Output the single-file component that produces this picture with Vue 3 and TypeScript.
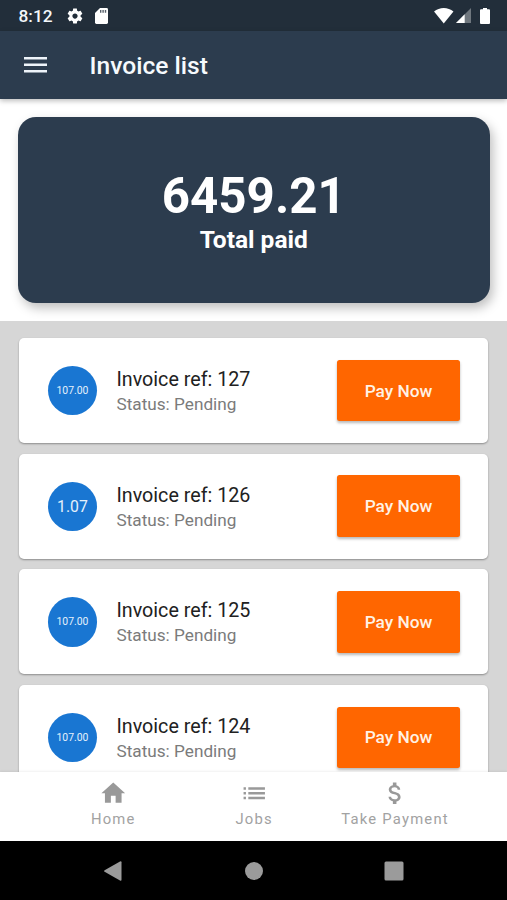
<script setup lang="ts">
interface Invoice {
  ref: number
  amount: string
  status: string
}

interface Tab {
  label: string
  icon: string
}

const total = '6459.21'

const invoices: Invoice[] = [
  { ref: 127, amount: '107.00', status: 'Pending' },
  { ref: 126, amount: '1.07', status: 'Pending' },
  { ref: 125, amount: '107.00', status: 'Pending' },
  { ref: 124, amount: '107.00', status: 'Pending' },
]

const tabs: Tab[] = [
  { label: 'Home', icon: 'M10 20v-6h4v6h5v-8h3L12 3 2 12h3v8z' },
  {
    label: 'Jobs',
    icon: 'M3 13h2v-2H3v2zm0 4h2v-2H3v2zm0-8h2V7H3v2zm4 4h14v-2H7v2zm0 4h14v-2H7v2zM7 7v2h14V7H7z',
  },
  {
    label: 'Take Payment',
    icon: 'M11.8 10.9c-2.27-.59-3-1.2-3-2.15 0-1.09 1.01-1.85 2.7-1.85 1.78 0 2.44.85 2.5 2.1h2.21c-.07-1.72-1.12-3.3-3.21-3.81V3h-3v2.16c-1.94.42-3.5 1.68-3.5 3.61 0 2.31 1.91 3.46 4.7 4.13 2.5.6 3 1.48 3 2.41 0 .69-.49 1.79-2.7 1.79-2.06 0-2.87-.92-2.98-2.1h-2.2c.12 2.19 1.76 3.42 3.68 3.83V21h3v-2.15c1.95-.37 3.5-1.5 3.5-3.55 0-2.84-2.43-3.81-4.7-4.4z',
  },
]
</script>

<template>
  <div class="screen">
    <div class="status-bar">
      <span class="clock">8:12</span>
      <svg class="gear" viewBox="0 0 24 24">
        <path
          fill-rule="evenodd"
          d="M19.43 12.98c.04-.32.07-.64.07-.98s-.03-.66-.07-.98l2.11-1.65c.19-.15.24-.42.12-.64l-2-3.46c-.12-.22-.39-.3-.61-.22l-2.49 1c-.52-.4-1.08-.73-1.69-.98l-.38-2.65C14.46 2.18 14.25 2 14 2h-4c-.25 0-.46.18-.49.42l-.38 2.65c-.61.25-1.17.59-1.69.98l-2.49-1c-.23-.09-.49 0-.61.22l-2 3.46c-.13.22-.07.49.12.64l2.11 1.65c-.04.32-.07.65-.07.98s.03.66.07.98l-2.11 1.65c-.19.15-.24.42-.12.64l2 3.46c.12.22.39.3.61.22l2.49-1c.52.4 1.08.73 1.69.98l.38 2.65c.03.24.24.42.49.42h4c.25 0 .46-.18.49-.42l.38-2.65c.61-.25 1.17-.59 1.69-.98l2.49 1c.23.09.49 0 .61-.22l2-3.46c.12-.22.07-.49-.12-.64l-2.11-1.65zM12 15.5c-1.93 0-3.5-1.57-3.5-3.5s1.57-3.5 3.5-3.5 3.5 1.57 3.5 3.5-1.57 3.5-3.5 3.5z"
        />
      </svg>
      <svg class="sd" viewBox="0 0 13 16">
        <path d="M5 0h6.6Q13 0 13 1.4v13.2Q13 16 11.6 16H1.4Q0 16 0 14.6V5z" />
        <path class="sd-pins" d="M5 2h1.4v2.7H5zM7.4 2h1.4v2.7H7.4zM9.8 2h1.4v2.7H9.8z" />
      </svg>
      <span class="spacer"></span>
      <svg class="wifi" viewBox="0 0 20 16">
        <path d="M0 3.7C5.5-1.2 14.5-1.2 20 3.7L10 16z" />
      </svg>
      <svg class="signal" viewBox="0 0 15 15">
        <path fill-opacity=".35" d="M15 0v15H0z" />
        <path d="M8.7 6.3V15H0z" />
      </svg>
      <svg class="battery" viewBox="0 0 10 16">
        <path d="M3 0h4v1.2h2Q10 1.2 10 2.2v12.8Q10 16 9 16H1Q0 16 0 15V2.2Q0 1.2 1 1.2h2z" />
      </svg>
    </div>

    <header class="app-bar">
      <svg class="menu" viewBox="0 0 24 16">
        <path d="M0 0h24v2.6H0zM0 6.7h24v2.6H0zM0 13.4h24V16H0z" />
      </svg>
      <h1 class="title">Invoice list</h1>
    </header>

    <section class="summary">
      <div class="total-card">
        <span class="total">{{ total }}</span>
        <span class="total-label">Total paid</span>
      </div>
    </section>

    <main class="list">
      <article v-for="invoice in invoices" :key="invoice.ref" class="invoice">
        <div class="avatar" :class="{ small: invoice.amount.length > 4 }">{{ invoice.amount }}</div>
        <div class="details">
          <span class="ref">Invoice ref: {{ invoice.ref }}</span>
          <span class="state">Status: {{ invoice.status }}</span>
        </div>
        <button class="pay" type="button">Pay Now</button>
      </article>
    </main>

    <nav class="tabs">
      <a v-for="tab in tabs" :key="tab.label" class="tab">
        <svg class="tab-icon" viewBox="0 0 24 24"><path :d="tab.icon" /></svg>
        <span class="tab-label">{{ tab.label }}</span>
      </a>
    </nav>

    <div class="system-nav">
      <svg viewBox="0 0 20 20"><path d="M1.6 9.2 17 .4Q18.5-.2 18.5 1.2v17.6Q18.5 20.2 17 19.6L1.6 10.8Q.5 10 1.6 9.2z" /></svg>
      <svg viewBox="0 0 20 20"><circle cx="10" cy="10" r="9" /></svg>
      <svg viewBox="0 0 20 20"><rect x=".5" y=".5" width="19" height="19" rx="1.5" /></svg>
    </div>
  </div>
</template>

<style>
body {
  background: #fff;
}
</style>

<style scoped>
.screen {
  display: flex;
  flex-direction: column;
  width: 507px;
  height: 900px;
  overflow: hidden;
  background: #fff;
  font-family: Roboto, 'Liberation Sans', sans-serif;
}

svg {
  display: block;
  flex: none;
  fill: #fff;
}

.status-bar {
  display: flex;
  flex: none;
  align-items: center;
  box-sizing: border-box;
  height: 30.5px;
  padding: 1px 17.5px 0 18.5px;
  background: #222e3a;
  color: #f4f8fb;
}

.clock {
  width: 47.5px;
  font-size: 17.3px;
  font-weight: 500;
  line-height: 20px;
}

.gear {
  width: 18px;
  height: 18px;
}

.sd {
  width: 13px;
  height: 16px;
  margin-left: 11px;
}

.sd-pins {
  fill: #56606a;
}

.spacer {
  flex: 1;
}

.wifi {
  width: 19.5px;
  height: 15.5px;
}

.signal {
  width: 15px;
  height: 15px;
  margin-left: 2.5px;
}

.battery {
  width: 10px;
  height: 16px;
  margin-left: 8.5px;
}

.app-bar {
  position: relative;
  z-index: 1;
  display: flex;
  flex: none;
  align-items: center;
  box-sizing: border-box;
  height: 68.5px;
  padding-left: 24px;
  background: #2c3c4e;
  box-shadow: 0 2px 5px rgba(0, 0, 0, 0.26);
}

.menu {
  width: 23px;
  height: 15.5px;
  fill: #eef4fa;
}

.title {
  margin: 2px 0 0 42.5px;
  color: #f6fafd;
  font-size: 24.6px;
  font-weight: 500;
  line-height: 30px;
}

.summary {
  flex: none;
  box-sizing: border-box;
  height: 221.5px;
  padding: 17.5px 17.5px 0 18px;
  overflow: hidden;
}

.total-card {
  display: flex;
  flex-direction: column;
  align-items: center;
  box-sizing: border-box;
  height: 186.5px;
  padding-top: 50px;
  border-radius: 18px;
  background: #2c3c4e;
  box-shadow: 3px 5px 11px rgba(0, 0, 0, 0.26);
  color: #fff;
}

.total {
  font-size: 49.3px;
  font-weight: 700;
  line-height: 58px;
}

.total-label {
  font-size: 24.5px;
  font-weight: 700;
  line-height: 30px;
}

.list {
  display: flex;
  flex: 1;
  flex-direction: column;
  gap: 10.3px;
  min-height: 0;
  padding: 17.5px 18.6px 0 19.4px;
  overflow: hidden;
  background: #d6d6d6;
}

.invoice {
  display: flex;
  flex: none;
  align-items: center;
  box-sizing: border-box;
  height: 105.3px;
  padding: 0 28.4px 0 28.4px;
  border-radius: 5px;
  background: #fff;
  box-shadow: 0 1px 2px rgba(0, 0, 0, 0.35);
}

.avatar {
  display: flex;
  flex: none;
  align-items: center;
  justify-content: center;
  width: 49.4px;
  height: 49.4px;
  border-radius: 50%;
  background: #1976d2;
  color: #e4f0fb;
  font-size: 15.8px;
}

.avatar.small {
  font-size: 10.4px;
}

.details {
  display: flex;
  flex: 1;
  flex-direction: column;
  margin: 2px 0 0 19.3px;
}

.ref {
  color: #212121;
  font-size: 19.7px;
  line-height: 26px;
}

.state {
  color: #7b7b7b;
  font-size: 17.2px;
  line-height: 23px;
}

.pay {
  width: 123px;
  height: 61.5px;
  padding: 0;
  border: 0;
  border-radius: 2.5px;
  background: #ff6600;
  box-shadow: 0 2px 3px rgba(0, 0, 0, 0.28);
  color: #fff2e5;
  font-family: inherit;
  font-size: 17.3px;
  font-weight: 500;
}

.tabs {
  position: relative;
  display: flex;
  flex: none;
  box-sizing: border-box;
  height: 69px;
  padding: 0 41.5px 0 42.8px;
  background: #fff;
  box-shadow: 0 -1px 2px rgba(0, 0, 0, 0.06);
}

.tab {
  display: flex;
  flex: 1;
  flex-direction: column;
  align-items: center;
  padding-top: 6.6px;
}

.tab-icon {
  width: 28.5px;
  height: 28.5px;
  fill: #999;
}

.tab-label {
  margin-top: 2px;
  color: #a2a2a2;
  font-size: 14.8px;
  letter-spacing: 1.23px;
  line-height: 20px;
  white-space: nowrap;
}

.system-nav {
  display: flex;
  flex: none;
  align-items: center;
  justify-content: space-between;
  box-sizing: border-box;
  height: 59px;
  padding: 0 103px;
  background: #000;
}

.system-nav svg {
  width: 20px;
  height: 20px;
  fill: #9b9b9b;
}
</style>
